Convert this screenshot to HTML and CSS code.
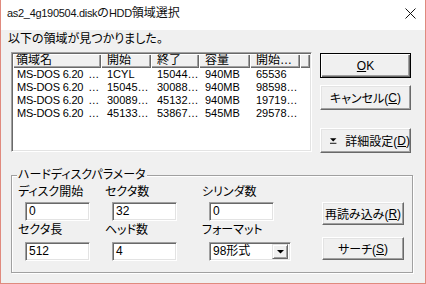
FILE: index.html
```html
<!DOCTYPE html>
<html lang="ja">
<head>
<meta charset="utf-8">
<title>HDD領域選択</title>
<link rel="stylesheet" href="styles.css">
</head>
<body>
<div class="window">
  <div class="titlebar">
    <span class="title"><span class="lat">as2_4g190504.disk</span>の<span class="lat">HDD</span>領域選択</span>
    <svg class="close" width="11" height="11" viewBox="0 0 11 11"><path d="M0.5 0.5L10.5 10.5M10.5 0.5L0.5 10.5" stroke="#111" stroke-width="1" fill="none"/></svg>
  </div>
  <div class="client">
    <div class="top">
      <div class="left">
        <div class="msg">以下の領域が見つかりました。</div>
        <div class="listbox">
          <div class="lv-head">
            <div class="hc c1">領域名</div>
            <div class="hc c2">開始</div>
            <div class="hc c3">終了</div>
            <div class="hc c4">容量</div>
            <div class="hc c5">開始…</div>
            <div class="hc c6"></div>
          </div>
          <div class="lv-row">
            <div class="dc c1"><span>MS-DOS 6.20</span><span class="ell">…</span></div>
            <div class="dc c2">1CYL</div>
            <div class="dc c3">15044…</div>
            <div class="dc c4">940MB</div>
            <div class="dc c5">65536</div>
          </div>
          <div class="lv-row">
            <div class="dc c1"><span>MS-DOS 6.20</span><span class="ell">…</span></div>
            <div class="dc c2">15045…</div>
            <div class="dc c3">30088…</div>
            <div class="dc c4">940MB</div>
            <div class="dc c5">98598…</div>
          </div>
          <div class="lv-row">
            <div class="dc c1"><span>MS-DOS 6.20</span><span class="ell">…</span></div>
            <div class="dc c2">30089…</div>
            <div class="dc c3">45132…</div>
            <div class="dc c4">940MB</div>
            <div class="dc c5">19719…</div>
          </div>
          <div class="lv-row">
            <div class="dc c1"><span>MS-DOS 6.20</span><span class="ell">…</span></div>
            <div class="dc c2">45133…</div>
            <div class="dc c3">53867…</div>
            <div class="dc c4">545MB</div>
            <div class="dc c5">29578…</div>
          </div>
        </div>
      </div>
      <div class="side">
        <button class="btn default"><u>O</u>K</button>
        <button class="btn cancel">キャンセル(<u>C</u>)</button>
        <button class="btn detail"><svg class="tri" width="8" height="6" viewBox="0 0 8 6"><path d="M0 0H7L3.5 3.5Z" fill="#000"/><path d="M0 5.5H7" stroke="#000" stroke-width="1"/></svg>詳細設定(<u>D</u>)</button>
      </div>
    </div>
    <div class="group">
      <div class="legend">ハードディスクパラメータ</div>
      <div class="grid">
        <div class="lbl">ディスク開始</div>
        <div class="lbl">セクタ数</div>
        <div class="lbl">シリンダ数</div>
        <div class="gbtns">
          <button class="btn small">再読み込み(<u>R</u>)</button>
          <button class="btn small">サーチ(<u>S</u>)</button>
        </div>
        <div class="edit">0</div>
        <div class="edit">32</div>
        <div class="edit">0</div>
        <div class="lbl">セクタ長</div>
        <div class="lbl">ヘッド数</div>
        <div class="lbl">フォーマット</div>
        <div class="edit">512</div>
        <div class="edit">4</div>
        <div class="select"><span class="sel-text">98形式</span><span class="sel-btn"><svg width="7" height="4" viewBox="0 0 7 4"><path d="M0 0H7L3.5 3.5Z" fill="#000"/></svg></span></div>
      </div>
    </div>
  </div>
</div>
</body>
</html>
```
FILE: styles.css
```css
* { box-sizing: border-box; }
html, body { margin: 0; padding: 0; }
body {
  width: 426px; height: 284px; overflow: hidden; background: #fff;
  font-family: "Liberation Sans", "Noto Sans CJK JP", sans-serif;
  font-size: 12px; color: #000;
  font-feature-settings: "palt";
}
.window {
  width: 426px; height: 284px;
  border: 1px solid #e08a7e; border-top: none;
  display: flex; flex-direction: column; background: #f0f0f0;
}
.titlebar {
  height: 30px; flex: none; background: #fff;
  display: flex; align-items: flex-start; justify-content: space-between;
  padding: 6px 9px 0 6px;
}
.title { font-size: 12px; line-height: 14px; color: #111; }
.lat { font-size: 11px; letter-spacing: -0.3px; }
.close { margin-top: 2px; }
.client { flex: 1; padding: 2px 0 0 7px; }
.top { display: flex; }
.left { width: 305px; }
.msg { line-height: 14px; height: 14px; }
.listbox {
  margin: 6px 0 0 3px; width: 301px; height: 100px; background: #fff;
  border: 1px solid; border-color: #a0a0a0 #fff #fff #a0a0a0;
  box-shadow: inset 1px 1px 0 #696969, inset -1px -1px 0 #e3e3e3;
  padding: 1px;
}
.lv-head { display: flex; height: 14px; }
.hc {
  height: 14px; line-height: 13px; padding-left: 6px; background: #f0f0f0;
  box-shadow: inset 1px 1px 0 #fff, inset -1px -1px 0 #696969, inset -2px -2px 0 #a0a0a0;
  white-space: nowrap; overflow: hidden;
}
.c1 { width: 88px; padding-left: 3px; }
.c2 { width: 50px; }
.c3 { width: 48px; }
.c4 { width: 51px; }
.c5 { width: 50px; }
.c6 { width: 10px; padding: 0; }
.lv-row { display: flex; height: 13px; line-height: 13px; font-size: 11px; }
.dc { padding-left: 6px; white-space: nowrap; overflow: hidden; }
.dc.c1 { display: flex; padding-left: 4px; padding-right: 2px; letter-spacing: -0.2px; }
.ell { margin-left: auto; }
.side { margin-left: 7px; padding-top: 21px; display: flex; flex-direction: column; }
.btn {
  font: inherit; color: #000; background: #f0f0f0; padding: 0; margin: 0;
  font-feature-settings: "palt";
  border: 1px solid; border-color: #fff #696969 #696969 #fff;
  box-shadow: inset -1px -1px 0 #a0a0a0, inset 1px 1px 0 #e3e3e3;
  width: 91px; height: 25px; display: flex; align-items: center; justify-content: center;
  white-space: nowrap;
}
.btn.default {
  border: 1px solid #000;
  box-shadow: inset 1px 1px 0 #fff, inset -1px -1px 0 #696969, inset -2px -2px 0 #a0a0a0;
}
.btn.cancel { margin-top: 7px; }
.btn.detail { margin-top: 18px; justify-content: flex-start; padding-left: 9px; }
.tri { margin-right: 8px; }
.group {
  margin: 22px 0 0 3px; width: 402px; height: 98px;
  border: 1px solid #a0a0a0;
  box-shadow: inset 1px 1px 0 #fff, 1px 1px 0 #fff;
}
.legend {
  width: fit-content; margin: -8px 0 0 5px; padding: 0 1px;
  line-height: 14px; height: 14px; background: #f0f0f0;
}
.grid {
  margin: 3px 0 0 6px;
  display: grid;
  grid-template-columns: 87px 97px 120px 82px;
  grid-template-rows: 14px 22px 16px 24px;
}
.lbl { line-height: 14px; align-self: end; white-space: nowrap; }
.edit, .select {
  align-self: end; margin-left: 7px; width: 65px; height: 19px; background: #fff;
  border: 1px solid; border-color: #a0a0a0 #fff #fff #a0a0a0;
  box-shadow: inset 1px 1px 0 #696969, inset -1px -1px 0 #e3e3e3;
  padding: 0 0 0 3px; line-height: 17px;
}
.select { width: 82px; display: flex; align-items: center; padding-right: 2px; }
.sel-text { flex: 1; }
.sel-btn {
  width: 16px; height: 15px; background: #f0f0f0;
  border: 1px solid; border-color: #e3e3e3 #696969 #696969 #e3e3e3;
  box-shadow: inset 1px 1px 0 #fff, inset -1px -1px 0 #a0a0a0;
  display: flex; align-items: center; justify-content: center;
}
.gbtns {
  grid-column: 4; grid-row: 1 / 5;
  display: flex; flex-direction: column; gap: 12px; padding-top: 17px;
}
.btn.small { width: 82px; height: 23px; }
```
